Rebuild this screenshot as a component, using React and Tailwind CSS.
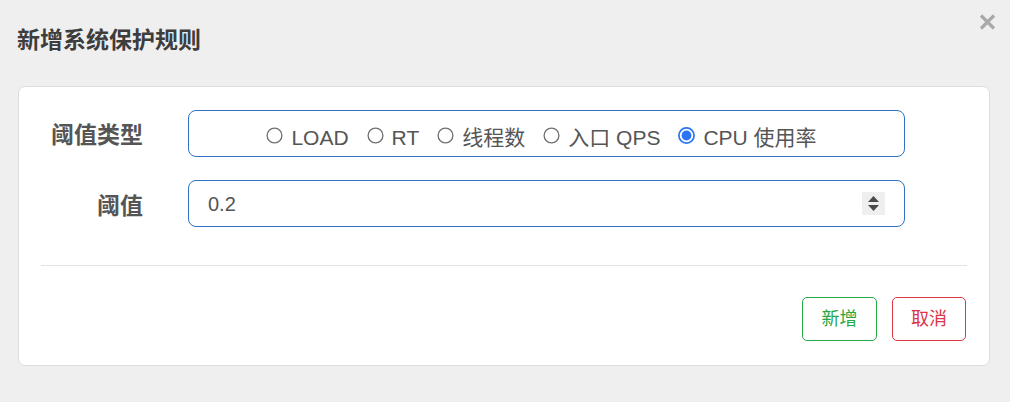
import React from "react";

const font = { fontFamily: '"Liberation Sans", Arial, "Noto Sans CJK SC", sans-serif' };

function Radio({ checked, label }) {
  return (
    <span className="flex items-center">
      {checked ? (
        <svg width="17" height="17" viewBox="0 0 17 17" className="shrink-0 mb-[3px]">
          <circle cx="8.5" cy="8.5" r="7.6" fill="white" stroke="#2b74f4" strokeWidth="1.7" />
          <circle cx="8.5" cy="8.5" r="4.9" fill="#2b74f4" />
        </svg>
      ) : (
        <svg width="17" height="17" viewBox="0 0 17 17" className="shrink-0 mb-[3px]">
          <circle cx="8.5" cy="8.5" r="7.4" fill="white" stroke="#6f6f6f" strokeWidth="1.3" />
        </svg>
      )}
      <span className="ml-[8px] text-[21px] text-[#555] leading-none">{label}</span>
    </span>
  );
}

export default function App() {
  return (
    <div className="w-[1010px] h-[402px] bg-[#efefef] relative overflow-hidden" style={font}>
      <div className="flex items-start justify-between pl-[17px] pr-[14px]">
        <h1 className="mt-[27px] text-[23px] font-bold text-[#3d3d3d] leading-[26px]">新增系统保护规则</h1>
        <svg width="17" height="16" viewBox="0 0 17 16" className="mt-[14px]">
          <path d="M2 1.5 L15 14.5 M15 1.5 L2 14.5" stroke="#a9a9a9" strokeWidth="3.2" strokeLinecap="butt" />
        </svg>
      </div>

      <div className="ml-[18px] mr-[20px] mt-[33px] h-[280px] bg-white border border-[#dcdcdc] rounded-[7px] pt-[23px] px-[22px]">
        <div className="flex items-center h-[47px]">
          <div className="w-[102px] text-right text-[23px] font-bold text-[#555] leading-none pt-[4px]">阈值类型</div>
          <div className="ml-[45px] w-[717px] h-[47px] border border-[#2f72c4] rounded-[8px] flex items-center justify-center gap-[18px] pr-[10px] pt-[7px]">
            <Radio label="LOAD" />
            <Radio label="RT" />
            <Radio label="线程数" />
            <Radio label="入口 QPS" />
            <Radio checked label="CPU 使用率" />
          </div>
        </div>

        <div className="flex items-center h-[47px] mt-[23px]">
          <div className="w-[102px] text-right text-[23px] font-bold text-[#555] leading-none pt-[6px]">阈值</div>
          <div className="ml-[45px] w-[717px] h-[47px] border border-[#2f72c4] rounded-[8px] flex items-center justify-between pl-[19px] pr-[19px]">
            <span className="text-[20px] text-[#555] leading-none">0.2</span>
            <div className="w-[23px] h-[23px] bg-[#efefef] flex flex-col items-center justify-center gap-[3px]">
              <svg width="11" height="6" viewBox="0 0 11 6"><path d="M5.5 0 L11 6 L0 6 Z" fill="#4a4a4a" /></svg>
              <svg width="11" height="6" viewBox="0 0 11 6"><path d="M0 0 L11 0 L5.5 6 Z" fill="#4a4a4a" /></svg>
            </div>
          </div>
        </div>

        <div className="mt-[38px] h-px bg-[#e3e3e3]" />

        <div className="flex justify-end gap-[15px] mt-[31px] pr-[1px]">
          <button className="w-[75px] h-[44px] border border-[#28a745] text-[#28a745] rounded-[5px] text-[18px] bg-white">新增</button>
          <button className="w-[74px] h-[44px] border border-[#dc3545] text-[#dc3545] rounded-[5px] text-[18px] bg-white">取消</button>
        </div>
      </div>
    </div>
  );
}
